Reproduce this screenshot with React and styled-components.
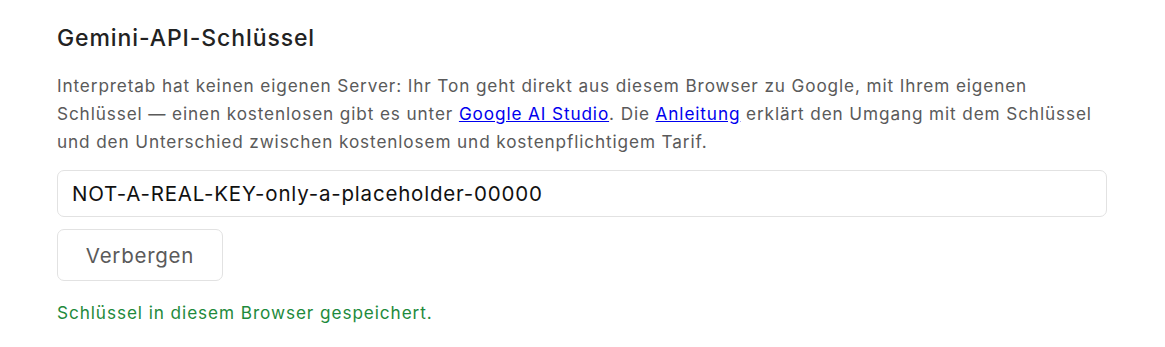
import React from 'react';
import styled, { createGlobalStyle } from 'styled-components';

const GlobalStyle = createGlobalStyle`
  body {
    margin: 0;
    background: #ffffff;
    font-family: Inter, "Noto Sans", sans-serif;
  }
`;

const Section = styled.section`
  padding: 22px 58px 0 57px;
  width: 1050px;
`;

const Heading = styled.h2`
  margin: 0 0 18px 0;
  font-size: 23px;
  font-weight: 500;
  letter-spacing: 0.9px;
  color: #222222;
  line-height: 32px;
`;

const Intro = styled.p`
  margin: 0 -6px 14px 0;
  font-size: 17.2px;
  letter-spacing: 0.88px;
  line-height: 28px;
  color: #5a5a5a;
  a {
    color: #0000ee;
    text-decoration: underline;
  }
`;

const KeyInput = styled.input`
  display: block;
  box-sizing: border-box;
  width: 100%;
  height: 47px;
  padding: 0 14px;
  border: 1.5px solid #e2e2e2;
  border-radius: 7px;
  font-family: inherit;
  font-size: 20.5px;
  letter-spacing: 0.8px;
  color: #111111;
  background: #ffffff;
  outline: none;
`;

const Button = styled.button`
  display: block;
  box-sizing: border-box;
  margin-top: 12px;
  width: 166px;
  height: 52px;
  border: 1.5px solid #e2e2e2;
  border-radius: 7px;
  background: #ffffff;
  font-family: inherit;
  font-size: 20.5px;
  letter-spacing: 0.75px;
  color: #5a5a5a;
  cursor: pointer;
`;

const Status = styled.p`
  margin: 18px 0 0 0;
  font-size: 17.2px;
  letter-spacing: 0.92px;
  line-height: 28px;
  color: #1e8a3c;
`;

export default function App() {
  return (
    <>
      <GlobalStyle />
      <Section>
        <Heading>Gemini-API-Schlüssel</Heading>
        <Intro>
          Interpretab hat keinen eigenen Server: Ihr Ton geht direkt aus diesem
          Browser zu Google, mit Ihrem eigenen Schlüssel — einen kostenlosen gibt
          es unter <a href="#studio">Google AI Studio</a>. Die{' '}
          <a href="#anleitung">Anleitung</a> erklärt den Umgang mit dem Schlüssel
          und den Unterschied zwischen kostenlosem und kostenpflichtigem Tarif.
        </Intro>
        <KeyInput
          type="text"
          defaultValue="NOT-A-REAL-KEY-only-a-placeholder-00000"
        />
        <Button type="button">Verbergen</Button>
        <Status>Schlüssel in diesem Browser gespeichert.</Status>
      </Section>
    </>
  );
}
